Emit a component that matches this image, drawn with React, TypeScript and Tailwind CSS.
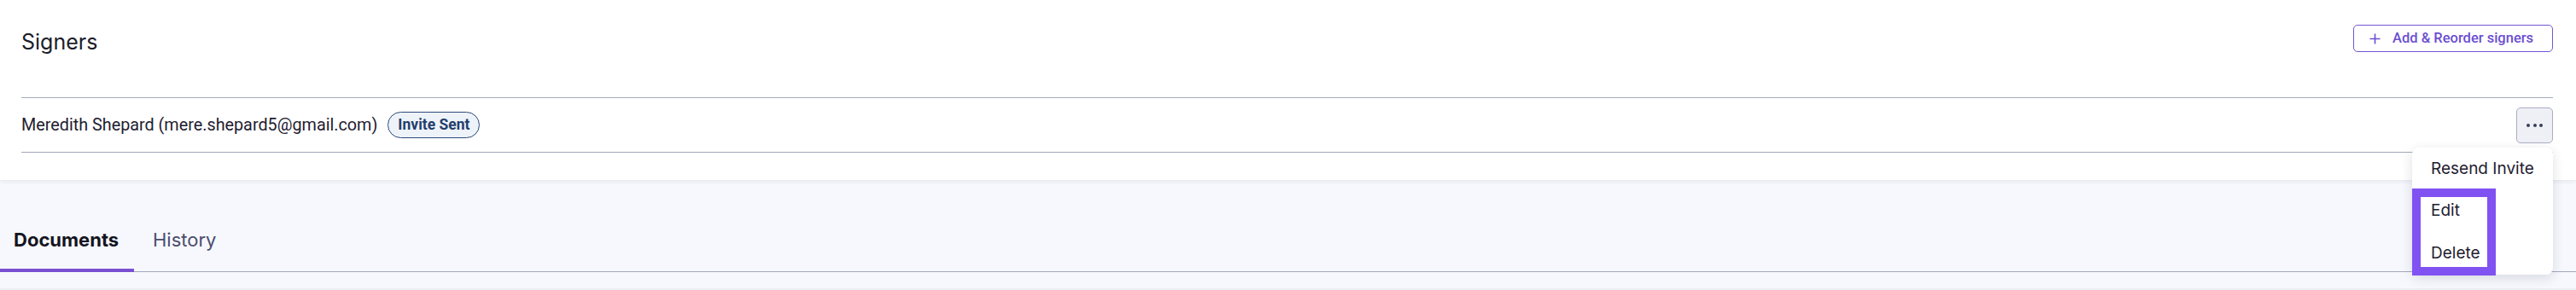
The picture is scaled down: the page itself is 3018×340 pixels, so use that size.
const menuItems = ["Resend Invite", "Edit", "Delete"];

function PlusIcon() {
  return (
    <svg width="13" height="13" viewBox="0 0 13 13" fill="none" aria-hidden>
      <path d="M6.5 0.5v12M0.5 6.5h12" stroke="currentColor" strokeWidth="1.6" />
    </svg>
  );
}

function SignerMenu() {
  return (
    <div className="absolute left-[2826px] top-[173px] z-20 w-[165px] rounded-[8px] bg-white shadow-[0_4px_14px_rgba(30,35,60,0.14)]">
      {menuItems.map((item) => (
        <div key={item} className="flex h-[49.5px] items-center pl-[22px] text-[19px] text-[#1f2030]">
          {item}
        </div>
      ))}
      {/* annotation box round Edit / Delete */}
      <div className="pointer-events-none absolute left-0 top-[48px] h-[102px] w-[98px] border-[10px] border-[#8052f2]" />
    </div>
  );
}

export default function App() {
  return (
    <div className="relative h-[340px] w-[3018px] overflow-hidden bg-[#f7f8fd] font-['Inter',sans-serif] text-[#1c1d2b]">
      <section className="relative z-10 h-[211px] bg-white pl-[25px] pr-[27px] shadow-[0_2px_5px_rgba(30,35,60,0.08)]">
        <div className="flex h-[114px] items-start justify-between">
          <h2 className="mt-[33px] text-[25px] leading-[32px]">Signers</h2>
          <button className="mt-[29px] flex h-[32px] w-[234px] items-center gap-[14px] rounded-[5px] border border-[#7355d5] pl-[18px] font-['Roboto',sans-serif] text-[16.5px] font-medium text-[#6b4fd0]">
            <PlusIcon />
            Add &amp; Reorder signers
          </button>
        </div>

        <div className="flex h-[65px] items-center justify-between border-y border-[#a4aabd]">
          <div className="flex items-center gap-[12px] font-['Roboto',sans-serif]">
            <span className="text-[19.8px] text-[#1f2030]">Meredith Shepard (mere.shepard5@gmail.com)</span>
            <span className="flex h-[31px] items-center rounded-full border-[1.5px] border-[#2c4a7a] bg-[#eef3fa] px-[11px] text-[17.5px] font-bold text-[#243e6b]">
              Invite Sent
            </span>
          </div>
          <button className="flex h-[42px] w-[43px] items-center justify-center gap-[3.5px] rounded-[5px] border border-[#a9aec3] bg-[#eff0f6]">
            <span className="size-[4px] rounded-full bg-[#3a3f5c]" />
            <span className="size-[4px] rounded-full bg-[#3a3f5c]" />
            <span className="size-[4px] rounded-full bg-[#3a3f5c]" />
          </button>
        </div>
      </section>

      <nav className="flex h-[108px] items-end border-b border-[#a3a8bb] pt-[56px]">
        <div className="-mb-px w-[157px] border-b-4 border-[#7b4fd2] pb-[20px] pl-[16px] text-[22px] font-bold leading-[28px] text-[#14151f]">
          Documents
        </div>
        <div className="-mb-px pb-[24px] pl-[22px] text-[22px] leading-[28px] text-[#4b4d6e]">History</div>
      </nav>
      <div className="mt-[19px] h-[2px] bg-[#eceef3]" />

      <SignerMenu />
    </div>
  );
}
